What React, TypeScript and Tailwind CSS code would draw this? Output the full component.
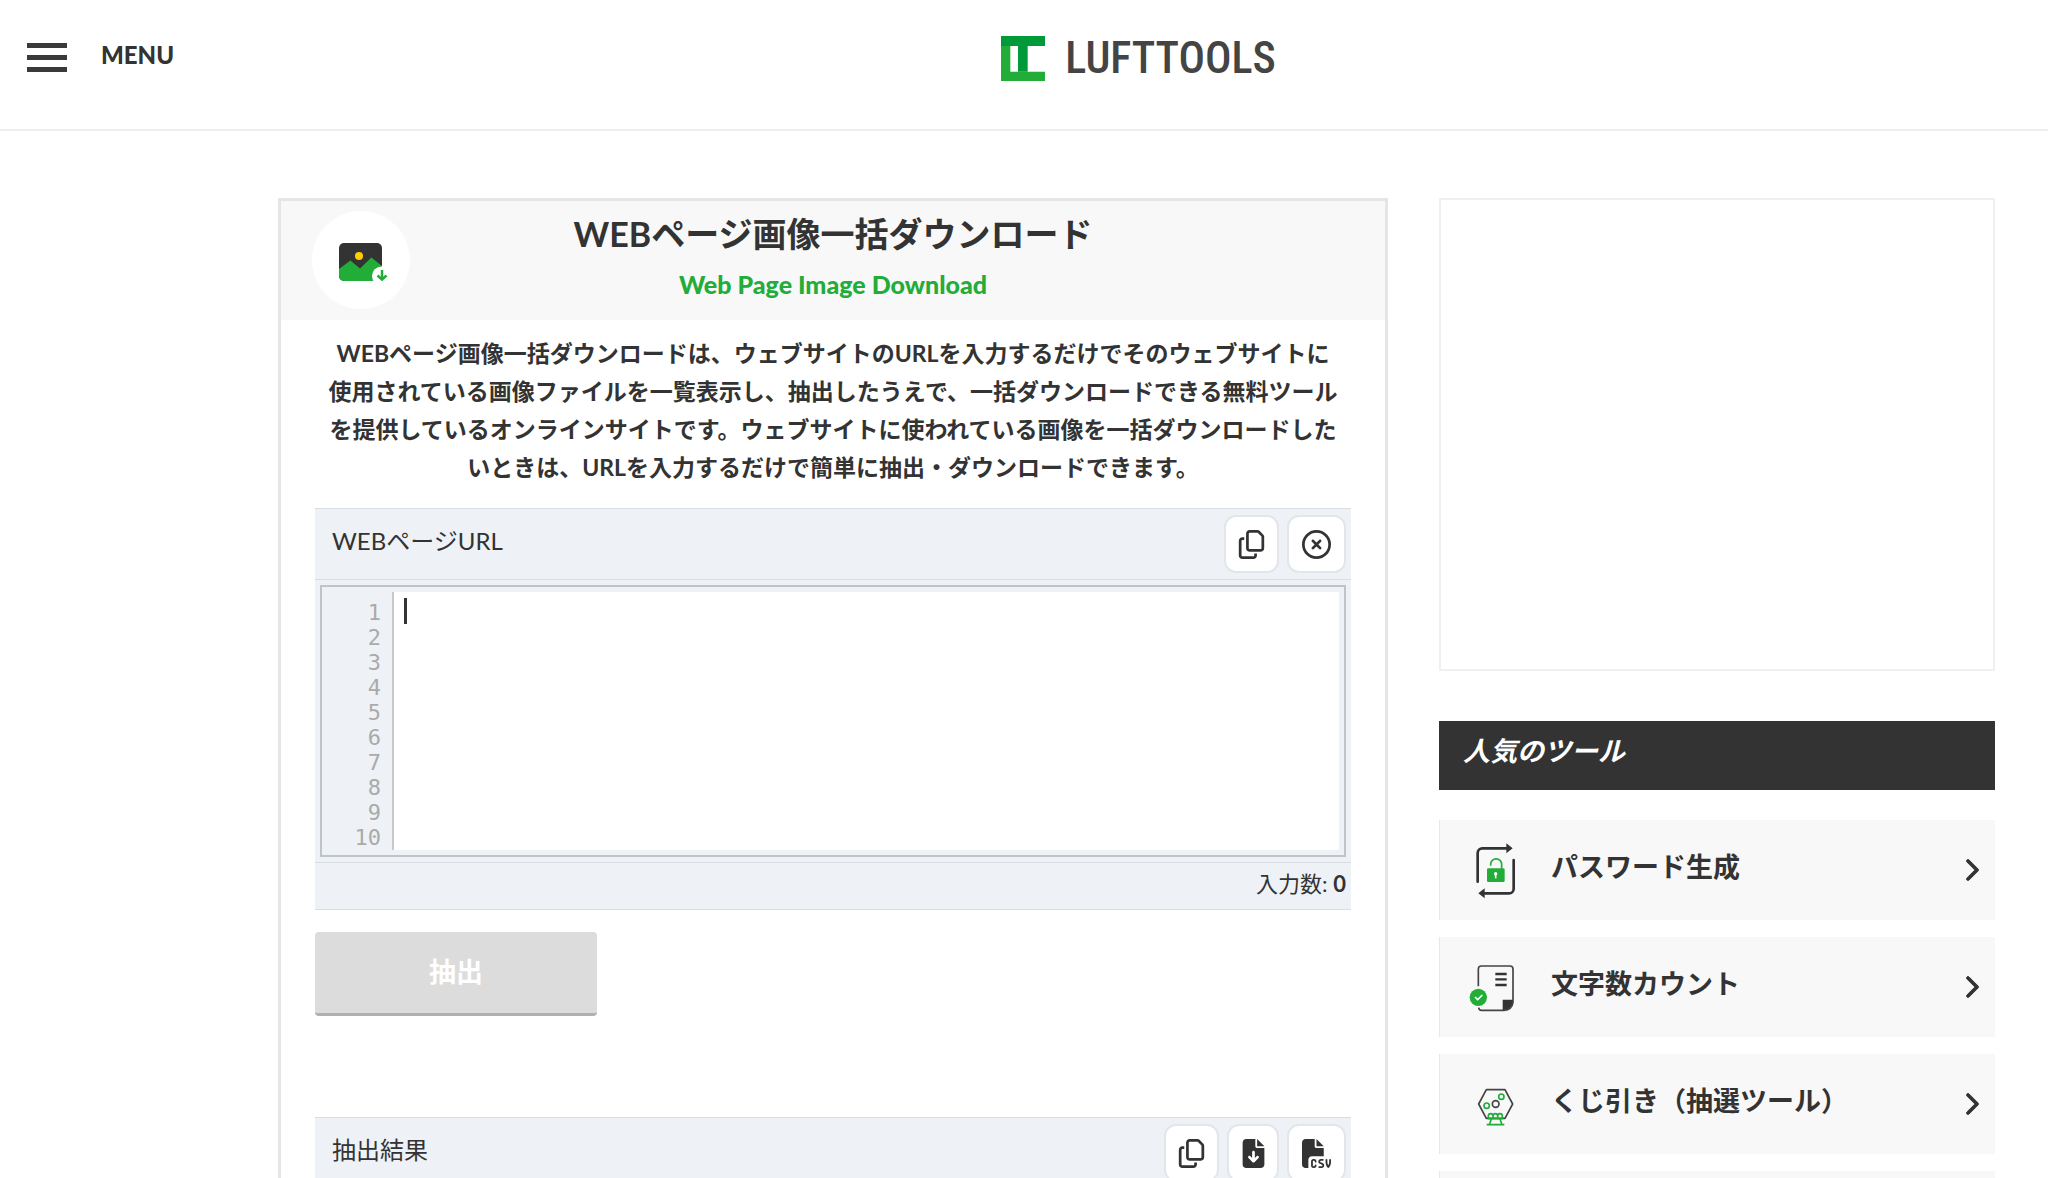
import type { ReactNode } from "react";
import {
  FaChevronRight,
  FaFileArrowDown,
  FaFileCsv,
  FaRegCircleXmark,
  FaRegCopy,
} from "react-icons/fa6";

const lines = [1, 2, 3, 4, 5, 6, 7, 8, 9, 10];

function Logo() {
  return (
    <a href="#" className="flex items-center gap-5">
      <svg viewBox="0 0 132 135" className="w-11 h-[45px]" aria-hidden="true">
        <path fill="#22ac38" d="M0 30H28V107H132V135H0z" />
        <path fill="#009a3a" d="M0 0H132V30H80V107H51V30H0z" />
      </svg>
      <span className="font-['Roboto_Condensed','Liberation_Sans_Narrow','Liberation_Sans',sans-serif] font-medium text-[44px] leading-[48px] text-[#444]">
        LUFTTOOLS
      </span>
    </a>
  );
}

function ImageDownloadIcon() {
  return (
    <svg viewBox="0 0 98 98" className="size-[98px] rounded-full bg-white" aria-hidden="true">
      <rect x="27" y="32" width="43" height="38" rx="5" fill="#333" />
      <path
        fill="#22ac38"
        d="M27 58 38.4 49.5 48 57.500 59.400 46.500 70 55V65a5 5 0 0 1-5 5H32a5 5 0 0 1-5-5z"
      />
      <circle cx="47" cy="45" r="4" fill="#fc0" />
      <circle cx="69.500" cy="65" r="9.500" fill="#fff" />
      <path fill="none" stroke="#22ac38" strokeWidth="2.500" d="M70 59V68" />
      <path fill="none" stroke="#22ac38" strokeWidth="2.500" d="M65.500 64.500 70 68.500 74.500 64.500" />
    </svg>
  );
}

function LockIcon() {
  return (
    <svg viewBox="0 0 240 240" className="size-20 shrink-0" aria-hidden="true">
      <g fill="none" stroke="#333" strokeWidth="8" strokeLinecap="round">
        <path d="M53 155V69a14 14 0 0 1 14-14h76" />
        <path d="M161 90v86a14 14 0 0 1-14 14H72" />
      </g>
      <path fill="#333" d="M139 40 158 55 139 70zM74 175 55 190 74 205z" />
      <path fill="none" stroke="#22ac38" strokeWidth="5" d="M92 107v-4a16 16 0 0 1 33 0v14" />
      <rect x="81" y="115" width="53" height="41" rx="4" fill="#22ac38" />
      <circle cx="107" cy="131" r="5" fill="#fff" />
      <path stroke="#fff" strokeWidth="5" d="M107 131v14" />
    </svg>
  );
}

function CountIcon() {
  return (
    <svg viewBox="0 0 240 240" className="size-20 shrink-0" aria-hidden="true">
      <path
        fill="none"
        stroke="#444"
        strokeWidth="5"
        d="M55 118V66a9 9 0 0 1 9-9h86a9 9 0 0 1 9 9v100q-3 22-27 24H64q-7 0-8-8"
      />
      <path stroke="#333" strokeWidth="7" d="M106 81h34M106 97h34M106 114h34" />
      <path fill="#333" d="M128 158h31q0 28-31 32z" />
      <circle cx="55" cy="151" r="26" fill="#22ac38" />
      <path fill="none" stroke="#fff" strokeWidth="5" d="M45 150l8 8 14-14" />
    </svg>
  );
}

function LotteryIcon() {
  return (
    <svg viewBox="0 0 240 240" className="size-20 shrink-0" aria-hidden="true">
      <path
        fill="none"
        stroke="#444"
        strokeWidth="5"
        strokeLinejoin="round"
        d="M79 77h56l23 43-23 43H79l-23-43z"
      />
      <circle cx="107" cy="120" r="10" fill="none" stroke="#444" strokeWidth="5" />
      <g fill="none" stroke="#22ac38" strokeWidth="5">
        <circle cx="124" cy="98" r="8" />
        <circle cx="80" cy="125" r="8" />
        <path d="M85 164v-8a7 7 0 0 1 14 0 7 7 0 0 1 14 0 7 7 0 0 1 14 0v8M99 164v-8M113 164v-8" />
        <path d="M80 182h53M88 182l6-17M126 182l-6-17M84 164h44" />
      </g>
    </svg>
  );
}

const tools = [
  { name: "パスワード生成", icon: <LockIcon /> },
  { name: "文字数カウント", icon: <CountIcon /> },
  { name: "くじ引き（抽選ツール）", icon: <LotteryIcon /> },
  { name: "", icon: null },
];

type IconButtonProps = { label: string; width: string; children: ReactNode };

function IconButton({ label, width, children }: IconButtonProps) {
  return (
    <button
      type="button"
      aria-label={label}
      className={`${width} h-[58px] flex items-center justify-center rounded-xl border-2 border-[#e2e5ea] bg-white text-[29px] text-[#333]`}
    >
      {children}
    </button>
  );
}

function Toolbar({ title, children }: { title: ReactNode; children: ReactNode }) {
  return (
    <div className="h-[72px] pl-[17px] pr-[5px] flex items-center justify-between border-y border-[#dadee2]">
      <div className="pb-[6px] text-[24px] leading-8">{title}</div>
      <div className="flex gap-2">{children}</div>
    </div>
  );
}

function UrlEditor() {
  return (
    <div className="bg-[#eef2f6]">
      <Toolbar title={<label htmlFor="url">WEBページURL</label>}>
        <IconButton label="コピー" width="w-[55px]">
          <FaRegCopy />
        </IconButton>
        <IconButton label="クリア" width="w-[59px]">
          <FaRegCircleXmark />
        </IconButton>
      </Toolbar>
      <div className="m-[5px] p-[5px] pl-0 flex border-2 border-[#bfc4c8]">
        <ol className="w-[70px] pt-2 pr-[11px] text-right font-['DejaVu_Sans_Mono',monospace] text-[22px] leading-[25px] text-[#aaa]">
          {lines.map((n) => (
            <li key={n}>{n}</li>
          ))}
        </ol>
        <div className="flex-1 pt-[6px] pl-[10px] flex border-l-2 border-[#c8c8c8] bg-white">
          <span className="w-[3px] h-[26px] bg-[#333]" />
          <textarea id="url" className="flex-1 resize-none bg-transparent outline-none text-[21px] leading-[25px]" />
        </div>
      </div>
      <div className="h-12 pr-[5px] pb-[6px] flex items-center justify-end border-y border-[#dadee2] text-[22px]">
        入力数:&nbsp;<span className="font-bold">0</span>
      </div>
    </div>
  );
}

function ToolPanel() {
  return (
    <main className="flex-1 min-w-0 border-[3px] border-[#e5e5e5]">
      <div className="h-[119px] relative bg-[#f8f8f8] text-center">
        <div className="absolute left-[31px] top-[10px]">
          <ImageDownloadIcon />
        </div>
        <h1 className="pt-2 text-[34px] leading-[50px] font-bold">WEBページ画像一括ダウンロード</h1>
        <p className="text-[25px] leading-[51px] font-black text-[#22ac38]">Web Page Image Download</p>
      </div>
      <div className="px-[34px] pt-[14px]">
        <p className="mb-[22px] text-center text-[23px] leading-[38px] font-bold">
          WEBページ画像一括ダウンロードは、ウェブサイトのURLを入力するだけでそのウェブサイトに
          <br />
          使用されている画像ファイルを一覧表示し、抽出したうえで、一括ダウンロードできる無料ツール
          <br />
          を提供しているオンラインサイトです。ウェブサイトに使われている画像を一括ダウンロードした
          <br />
          いときは、URLを入力するだけで簡単に抽出・ダウンロードできます。
        </p>
        <UrlEditor />
        <button
          type="button"
          className="mt-[22px] w-[282px] h-[84px] rounded border-b-[3px] border-[#b0b0b0] bg-[#dcdcdc] text-[27px] font-bold text-white"
        >
          抽出
        </button>
        <div className="mt-[101px] bg-[#eef2f6]">
          <Toolbar title="抽出結果">
            <IconButton label="コピー" width="w-[55px]">
              <FaRegCopy />
            </IconButton>
            <IconButton label="ダウンロード" width="w-[52px]">
              <FaFileArrowDown />
            </IconButton>
            <IconButton label="CSVダウンロード" width="w-[59px]">
              <FaFileCsv />
            </IconButton>
          </Toolbar>
        </div>
      </div>
    </main>
  );
}

function Sidebar() {
  return (
    <aside className="w-[556px] shrink-0">
      <div className="h-[473px] border-2 border-[#f0f0f0]" />
      <h2 className="mt-[50px] h-[69px] pl-6 pb-2 flex items-center bg-[#333] text-[27px] font-bold italic text-white">
        人気のツール
      </h2>
      <nav className="mt-[30px] flex flex-col gap-[17px]">
        {tools.map((tool) => (
          <a
            key={tool.name}
            href="#"
            className="h-[100px] pl-5 pr-3 flex items-center gap-[11px] border-l border-[#e8e8e8] bg-[#f8f8f8]"
          >
            {tool.icon}
            <span className="flex-1 pb-[6px] text-[27px] font-bold">{tool.name}</span>
            <FaChevronRight className="text-[24px] stroke-current stroke-[20]" />
          </a>
        ))}
      </nav>
    </aside>
  );
}

export default function App() {
  return (
    <div className="h-screen overflow-hidden bg-white font-['Lato','Noto_Sans_CJK_JP',sans-serif] text-[#333]">
      <header className="h-[131px] pl-[27px] pr-[53px] flex items-start border-b-2 border-[#eee]">
        <button type="button" className="mt-10 w-[251px] flex items-start gap-[34px]">
          <span className="mt-[3px] w-10 flex flex-col gap-[7px]">
            <span className="h-[5px] bg-[#3a3a3a]" />
            <span className="h-[5px] bg-[#3a3a3a]" />
            <span className="h-[5px] bg-[#3a3a3a]" />
          </span>
          <span className="text-[24px] leading-[30px] font-black">MENU</span>
        </button>
        <div className="mt-[34px] pl-1 flex-1 flex justify-center">
          <Logo />
        </div>
      </header>
      <div className="mt-[67px] pl-[278px] pr-[53px] flex items-start gap-[51px]">
        <ToolPanel />
        <Sidebar />
      </div>
    </div>
  );
}
